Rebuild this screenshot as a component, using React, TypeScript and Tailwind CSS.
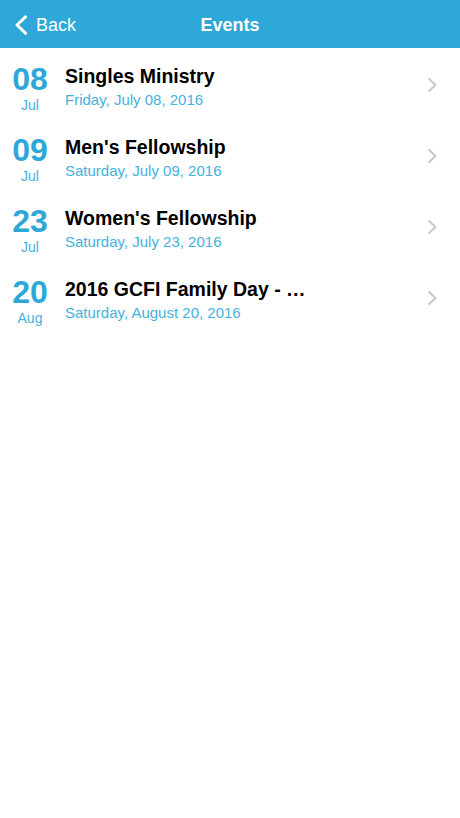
const events = [
  { day: "08", month: "Jul", title: "Singles Ministry", date: "Friday, July 08, 2016" },
  { day: "09", month: "Jul", title: "Men's Fellowship", date: "Saturday, July 09, 2016" },
  { day: "23", month: "Jul", title: "Women's Fellowship", date: "Saturday, July 23, 2016" },
  { day: "20", month: "Aug", title: "2016 GCFI Family Day - …", date: "Saturday, August 20, 2016" },
];

function Header() {
  return (
    <div className="relative flex h-[48px] items-center bg-[#2ea7d9] pt-[2px] text-white">
      <div className="flex items-center pl-[14px]">
        <svg width="14" height="20" viewBox="0 0 14 20" fill="none">
          <path d="M11.5 1.8 L3 10 L11.5 18.2" stroke="white" strokeWidth="3" strokeLinecap="round" strokeLinejoin="round" />
        </svg>
        <span className="ml-[8px] text-[18px] leading-[22px]">Back</span>
      </div>
      <div className="pointer-events-none absolute inset-x-0 text-center text-[18px] font-bold leading-[22px]">
        Events
      </div>
    </div>
  );
}

function EventRow({ day, month, title, date }: (typeof events)[number]) {
  return (
    <div className="flex h-[71px] items-start pt-[16px]">
      <div className="mt-[1px] flex w-[60px] flex-col items-center">
        <span className="text-[32px] font-bold leading-[28px] text-[#2ea7d9]">{day}</span>
        <span className="mt-[4px] text-[14px] leading-[16px] text-[#45b1de]">{month}</span>
      </div>
      <div className="ml-[5px] flex min-w-0 flex-1 flex-col">
        <span className="truncate text-[19.5px] font-bold leading-[24px] text-black">{title}</span>
        <span className="mt-[2px] text-[15px] leading-[20px] text-[#45b1de]">{date}</span>
      </div>
      <div className="ml-2 mr-[23px] mt-[14px]">
        <svg width="9" height="14" viewBox="0 0 9 14" fill="none">
          <path d="M1.2 1 L7.5 7 L1.2 13" stroke="#c7c7cc" strokeWidth="2" strokeLinecap="round" strokeLinejoin="round" />
        </svg>
      </div>
    </div>
  );
}

export default function App() {
  return (
    <div className="h-[818px] w-[460px] bg-white font-['Liberation_Sans',Arial,sans-serif]">
      <Header />
      {events.map((e) => (
        <EventRow key={e.day + e.month} {...e} />
      ))}
    </div>
  );
}
